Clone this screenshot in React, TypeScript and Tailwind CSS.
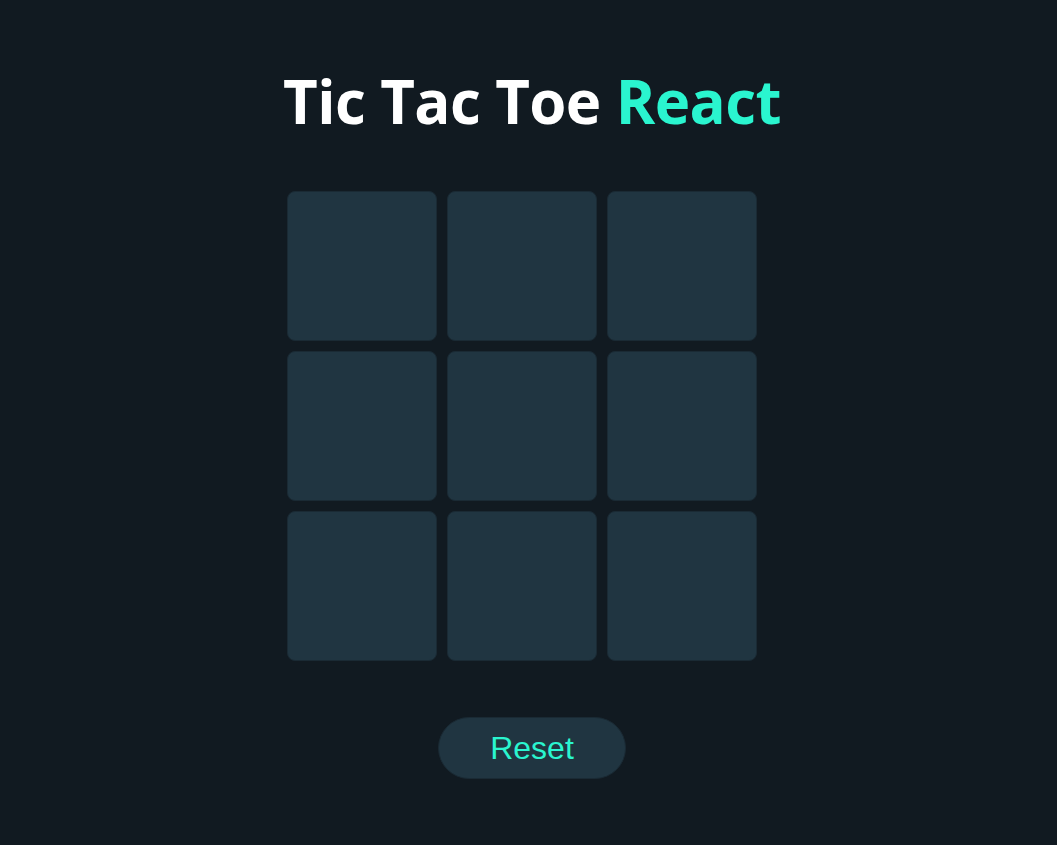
import { useState } from "react";

export default function App() {
  const [board, setBoard] = useState<(string | null)[]>(Array(9).fill(null));

  const handleClick = (idx: number) => {
    if (board[idx]) return;
    const next = [...board];
    const turn = board.filter(Boolean).length % 2 === 0 ? "X" : "O";
    next[idx] = turn;
    setBoard(next);
  };

  return (
    <div className="min-h-screen w-full bg-[#111a21] flex flex-col items-center pl-[7px]" style={{ fontFamily: "'Liberation Sans', Arial, sans-serif" }}>
      <h1 className="mt-[63px] text-[60px] leading-[76px] font-bold text-white tracking-[-0.6px]" style={{ fontFamily: "'Open Sans', 'Noto Sans', sans-serif" }}>
        Tic Tac Toe <span className="text-[#2af5cf]">React</span>
      </h1>
      <div className="mt-[52px] mr-[20px] grid grid-cols-3 gap-[10px]">
        {board.map((cell, idx) => (
          <button
            key={idx}
            onClick={() => handleClick(idx)}
            className="w-[150px] h-[150px] rounded-[8px] bg-[#203541] border border-[#1a2a34] text-[#2af5cf] text-6xl font-bold"
          >
            {cell}
          </button>
        ))}
      </div>
      <button
        onClick={() => setBoard(Array(9).fill(null))}
        className="mt-[56px] w-[188px] h-[62px] rounded-full bg-[#203541] border border-[#1a2a34] text-[#2af5cf] text-[32px]"
      >
        Reset
      </button>
    </div>
  );
}
